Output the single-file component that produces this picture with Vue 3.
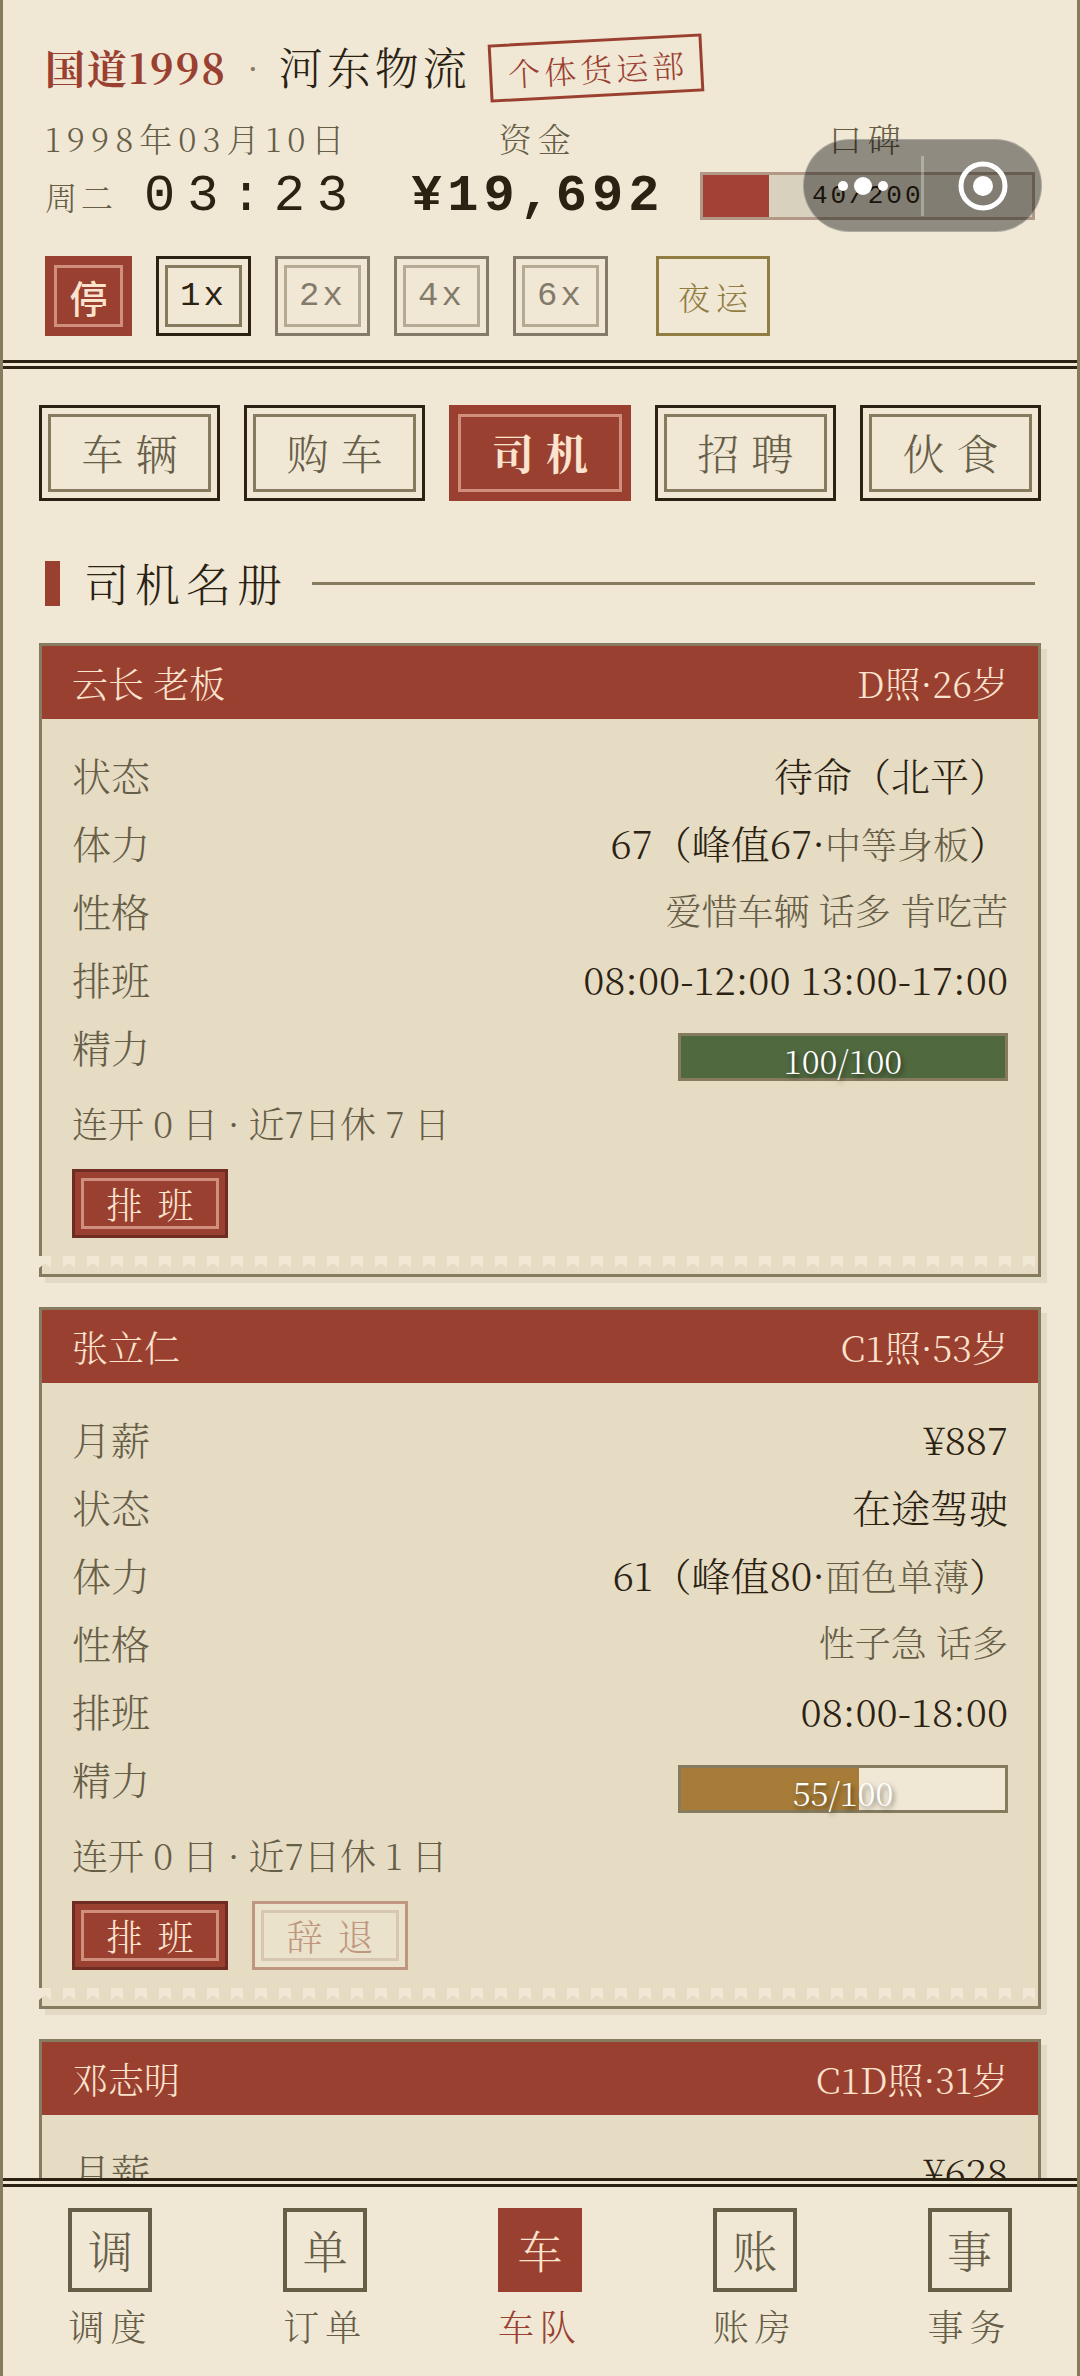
<template>
  <div class="app">
    <header class="topbar">
      <div class="brand">
        <span class="game">国道1998</span>
        <span class="sep">·</span>
        <h1 class="company">河东物流</h1>
        <span class="stamp">个体货运部</span>
      </div>

      <div class="info">
        <div class="info-col date-col">
          <div class="info-label">1998年03月10日</div>
          <div class="info-value">
            <span class="weekday">周二</span>
            <span class="clock">03:23</span>
          </div>
        </div>
        <div class="info-col centered">
          <div class="info-label">资金</div>
          <div class="info-value money">¥19,692</div>
        </div>
        <div class="info-col centered">
          <div class="info-label">口碑</div>
          <div class="rep-bar">
            <div class="rep-fill" :style="{ width: reputation / 2 + '%' }"></div>
            <span class="rep-text">{{ reputation }}/200</span>
          </div>
        </div>
      </div>

      <div class="speeds">
        <button class="speed stop">停</button>
        <button
          v-for="s in speeds"
          :key="s"
          class="speed"
          :class="{ dim: s !== currentSpeed }"
          @click="currentSpeed = s"
        >{{ s }}</button>
        <button class="night">夜运</button>
      </div>
    </header>

    <div class="capsule">
      <button class="capsule-btn" aria-label="更多">
        <svg viewBox="0 0 52 52" width="52" height="52" fill="#fff">
          <circle cx="6" cy="26" r="5"/>
          <circle cx="26" cy="26" r="9"/>
          <circle cx="46" cy="26" r="5"/>
        </svg>
      </button>
      <span class="capsule-line"></span>
      <button class="capsule-btn" aria-label="关闭">
        <svg viewBox="0 0 52 52" width="52" height="52">
          <circle cx="26" cy="26" r="22" fill="none" stroke="#fff" stroke-width="5"/>
          <circle cx="26" cy="26" r="10" fill="#fff"/>
        </svg>
      </button>
    </div>

    <main class="content">
      <div class="tabs">
        <button
          v-for="t in tabs"
          :key="t"
          class="tab"
          :class="{ active: t === currentTab }"
          @click="currentTab = t"
        >{{ t }}</button>
      </div>

      <h2 class="section-title">司机名册</h2>

      <section v-for="d in drivers" :key="d.name" class="card">
        <div class="card-head">
          <span>{{ d.name }}</span>
          <span>{{ d.license }}照·{{ d.age }}岁</span>
        </div>
        <div class="card-body">
          <div v-if="d.salary" class="row">
            <span class="label">月薪</span>
            <span>¥{{ d.salary }}</span>
          </div>
          <template v-if="d.status">
            <div class="row">
              <span class="label">状态</span>
              <span>{{ d.status }}</span>
            </div>
            <div class="row">
              <span class="label">体力</span>
              <span>{{ d.strength }}（峰值{{ d.peak }}·<span class="muted">{{ d.build }}</span>）</span>
            </div>
            <div class="row">
              <span class="label">性格</span>
              <span class="muted">{{ d.traits }}</span>
            </div>
            <div class="row">
              <span class="label">排班</span>
              <span>{{ d.shift }}</span>
            </div>
            <div class="row">
              <span class="label">精力</span>
              <div class="energy">
                <div class="energy-fill" :class="{ low: d.energy < 60 }" :style="{ width: d.energy + '%' }"></div>
                <span class="energy-text">{{ d.energy }}/100</span>
              </div>
            </div>
            <p class="note">连开 0 日 · 近7日休 {{ d.rest }} 日</p>
            <div class="actions">
              <button class="btn btn-primary">排班</button>
              <button v-if="d.salary" class="btn btn-fire" disabled>辞退</button>
            </div>
          </template>
        </div>
        <svg class="tear" width="100%" height="12">
          <defs>
            <pattern id="teeth" width="24" height="12" patternUnits="userSpaceOnUse">
              <path d="M0 0H12V12L6 7L0 12Z" fill="#f0e8d5"/>
            </pattern>
          </defs>
          <rect width="100%" height="12" fill="url(#teeth)"/>
        </svg>
      </section>
    </main>

    <nav class="bottom-nav">
      <a
        v-for="n in navItems"
        :key="n.text"
        href="#"
        class="nav-item"
        :class="{ active: n.text === '车队' }"
      >
        <span class="nav-icon">{{ n.icon }}</span>
        <span class="nav-text">{{ n.text }}</span>
      </a>
    </nav>
  </div>
</template>

<script setup>
import { ref } from 'vue';

const reputation = 40;

const speeds = ['1x', '2x', '4x', '6x'];
const currentSpeed = ref('1x');

const tabs = ['车辆', '购车', '司机', '招聘', '伙食'];
const currentTab = ref('司机');

const drivers = [
  {
    name: '云长 老板', license: 'D', age: 26, status: '待命（北平）',
    strength: 67, peak: 67, build: '中等身板', traits: '爱惜车辆 话多 肯吃苦',
    shift: '08:00-12:00 13:00-17:00', energy: 100, rest: 7,
  },
  {
    name: '张立仁', license: 'C1', age: 53, salary: 887, status: '在途驾驶',
    strength: 61, peak: 80, build: '面色单薄', traits: '性子急 话多',
    shift: '08:00-18:00', energy: 55, rest: 1,
  },
  { name: '邓志明', license: 'C1D', age: 31, salary: 628 },
];

const navItems = [
  { icon: '调', text: '调度' },
  { icon: '单', text: '订单' },
  { icon: '车', text: '车队' },
  { icon: '账', text: '账房' },
  { icon: '事', text: '事务' },
];
</script>

<style>
body {
  background: #f0e8d5;
}
</style>

<style scoped>
.app {
  --paper: #f0e8d5;
  --ink: #2b2213;
  --ink-soft: #675e48;
  --line: #867b5f;
  --red: #9a4031;
  --mono: "Liberation Mono", "Noto Sans CJK SC", monospace;
  position: relative;
  box-sizing: border-box;
  height: 100vh;
  display: flex;
  flex-direction: column;
  border: solid var(--line);
  border-width: 0 3px;
  background: var(--paper);
  color: var(--ink);
  font-family: "Noto Serif CJK SC", "Liberation Serif", "Noto Sans CJK SC", serif;
  font-weight: 300;
}

button {
  margin: 0;
  padding: 0;
  border: none;
  background: none;
  color: inherit;
  font: inherit;
  cursor: pointer;
}

/* header */
.topbar {
  padding: 38px 42px 24px;
  border-bottom: 9px double var(--ink);
}

.brand {
  display: flex;
  align-items: center;
  height: 56px;
  white-space: nowrap;
}

.game {
  color: var(--red);
  font-size: 40px;
  font-weight: 700;
  letter-spacing: 2px;
}

.sep {
  margin: 0 20px;
  color: var(--line);
  font-size: 36px;
}

.company {
  margin: 0;
  font-size: 44px;
  font-weight: 300;
  letter-spacing: 4px;
}

.stamp {
  margin: 4px 0 0 18px;
  padding: 0 12px 0 16px;
  border: 3px solid var(--red);
  color: var(--red);
  font-size: 32px;
  line-height: 52px;
  letter-spacing: 4px;
  transform: rotate(-3deg);
}

.info {
  display: grid;
  grid-template-columns: auto auto 1fr;
  column-gap: 36px;
  margin-top: 24px;
}

.date-col {
  min-width: 330px;
}

.centered {
  text-align: center;
}

.info-label {
  color: var(--ink-soft);
  font-size: 33px;
  line-height: 40px;
  letter-spacing: 6px;
}

.info-value {
  display: flex;
  align-items: center;
  height: 48px;
  margin-top: 14px;
}

.weekday {
  margin-right: 27px;
  color: var(--ink-soft);
  font-size: 32px;
  letter-spacing: 4px;
}

.clock {
  font-family: var(--mono);
  font-size: 52px;
  letter-spacing: 12px;
}

.money {
  font-family: var(--mono);
  font-size: 52px;
  font-weight: 700;
  letter-spacing: 5px;
}

.rep-bar {
  position: relative;
  box-sizing: border-box;
  height: 48px;
  margin-top: 14px;
  border: 3px solid #b09a87;
  background: #d8d1be;
}

.rep-fill {
  height: 100%;
  background: #a34135;
}

.rep-text {
  position: absolute;
  inset: 0;
  font-family: var(--mono);
  font-size: 26px;
  line-height: 42px;
  letter-spacing: 3px;
}

.speeds {
  display: flex;
  gap: 24px;
  margin-top: 36px;
}

.speed,
.night,
.tab,
.btn {
  box-sizing: border-box;
  border: 3px solid var(--ink);
}

/* thin second frame inside the outer border */
.speed,
.tab,
.btn {
  outline: 3px solid var(--line);
  outline-offset: -12px;
}

.speed {
  min-width: 95px;
  height: 80px;
  font-family: var(--mono);
  font-size: 34px;
  letter-spacing: 3px;
}

.speed.dim {
  opacity: 0.55;
}

.speed.stop {
  min-width: 87px;
  border-color: var(--red);
  outline-color: #cf8f7c;
  background: var(--red);
  color: #fbe3cd;
  font-size: 38px;
  font-weight: 500;
  letter-spacing: 0;
}

.night {
  height: 80px;
  margin-left: 24px;
  padding: 0 13px 0 19px;
  border-color: #917c42;
  color: #917c42;
  font-size: 32px;
  letter-spacing: 6px;
}

/* floating mini-program menu */
.capsule {
  position: absolute;
  top: 139px;
  right: 35px;
  z-index: 10;
  box-sizing: border-box;
  display: flex;
  align-items: center;
  width: 239px;
  height: 93px;
  border: 1px solid rgba(255, 255, 255, 0.25);
  border-radius: 47px;
  background: rgba(0, 0, 0, 0.4);
}

.capsule-btn {
  flex: 1;
  display: flex;
  align-items: center;
  justify-content: center;
}

.capsule-line {
  width: 3px;
  height: 60px;
  background: rgba(255, 255, 255, 0.3);
}

/* content */
.content {
  flex: 1;
  min-height: 0;
  overflow: hidden;
  padding: 36px 36px 0;
}

.tabs {
  display: grid;
  grid-template-columns: repeat(5, 1fr);
  gap: 24px;
}

.tab {
  height: 96px;
  padding: 0 0 3px 12px;
  color: var(--ink-soft);
  font-size: 42px;
  letter-spacing: 12px;
}

.tab.active {
  border-color: var(--red);
  outline-color: #cf8f7c;
  background: var(--red);
  color: #fbe3cd;
  font-weight: 700;
}

.section-title {
  display: flex;
  align-items: center;
  margin: 54px 6px 32px;
  font-size: 45px;
  font-weight: 300;
  line-height: 56px;
  letter-spacing: 6px;
}

.section-title::before {
  content: "";
  width: 15px;
  height: 45px;
  margin-right: 24px;
  background: var(--red);
}

.section-title::after {
  content: "";
  flex: 1;
  height: 3px;
  margin-left: 24px;
  background: var(--line);
}

.card {
  position: relative;
  margin-bottom: 30px;
  border: 3px solid var(--line);
  background: #e6dcc3;
  box-shadow: 6px 6px 0 #e3dac6;
}

.card-head {
  display: flex;
  justify-content: space-between;
  padding: 0 30px;
  background: var(--red);
  color: #fbe3cd;
  font-size: 36px;
  line-height: 73px;
}

.card-body {
  padding: 21px 30px 36px;
}

.row {
  display: flex;
  justify-content: space-between;
  height: 68px;
  font-size: 39px;
  line-height: 68px;
}

.label {
  color: var(--ink-soft);
}

.muted {
  color: var(--ink-soft);
  font-size: 36px;
}

.energy {
  position: relative;
  box-sizing: border-box;
  width: 330px;
  height: 48px;
  margin-top: 21px;
  border: 3px solid var(--line);
  background: var(--paper);
}

.energy-fill {
  height: 100%;
  background: #50693f;
}

.energy-fill.low {
  background: #a67c38;
}

.energy-text {
  position: absolute;
  inset: 0;
  color: #fff;
  font-size: 33px;
  line-height: 48px;
  text-align: center;
  text-shadow: 2px 3px 5px rgba(0, 0, 0, 0.5);
}

.note {
  margin: 19px 0 22px;
  color: var(--ink-soft);
  font-size: 36px;
  line-height: 48px;
}

.actions {
  display: flex;
  gap: 24px;
}

.btn {
  width: 156px;
  height: 69px;
  padding-left: 15px;
  font-size: 36px;
  letter-spacing: 15px;
}

.btn-primary {
  border-color: #6f2c20;
  outline-color: #cf8f7c;
  background: var(--red);
  color: #fbe3cd;
}

.btn-fire {
  border-color: #bf9781;
  outline-color: #d8c7b0;
  background: #ebe2cc;
  color: #bf9781;
}

.tear {
  position: absolute;
  left: -3px;
  bottom: 6px;
  width: calc(100% + 3px);
}

/* bottom navigation */
.bottom-nav {
  display: grid;
  grid-template-columns: repeat(5, 1fr);
  padding: 21px 0 26px;
  border-top: 9px double var(--ink);
}

.nav-item {
  display: flex;
  flex-direction: column;
  align-items: center;
  gap: 10px;
  color: var(--ink-soft);
  text-decoration: none;
}

.nav-icon {
  box-sizing: border-box;
  width: 84px;
  height: 84px;
  border: 4px solid currentColor;
  font-size: 45px;
  line-height: 76px;
  text-align: center;
}

.nav-text {
  font-size: 36px;
  line-height: 48px;
  letter-spacing: 6px;
}

.nav-item.active {
  color: var(--red);
}

.nav-item.active .nav-icon {
  border-color: var(--red);
  background: var(--red);
  color: #fbe3cd;
}
</style>
